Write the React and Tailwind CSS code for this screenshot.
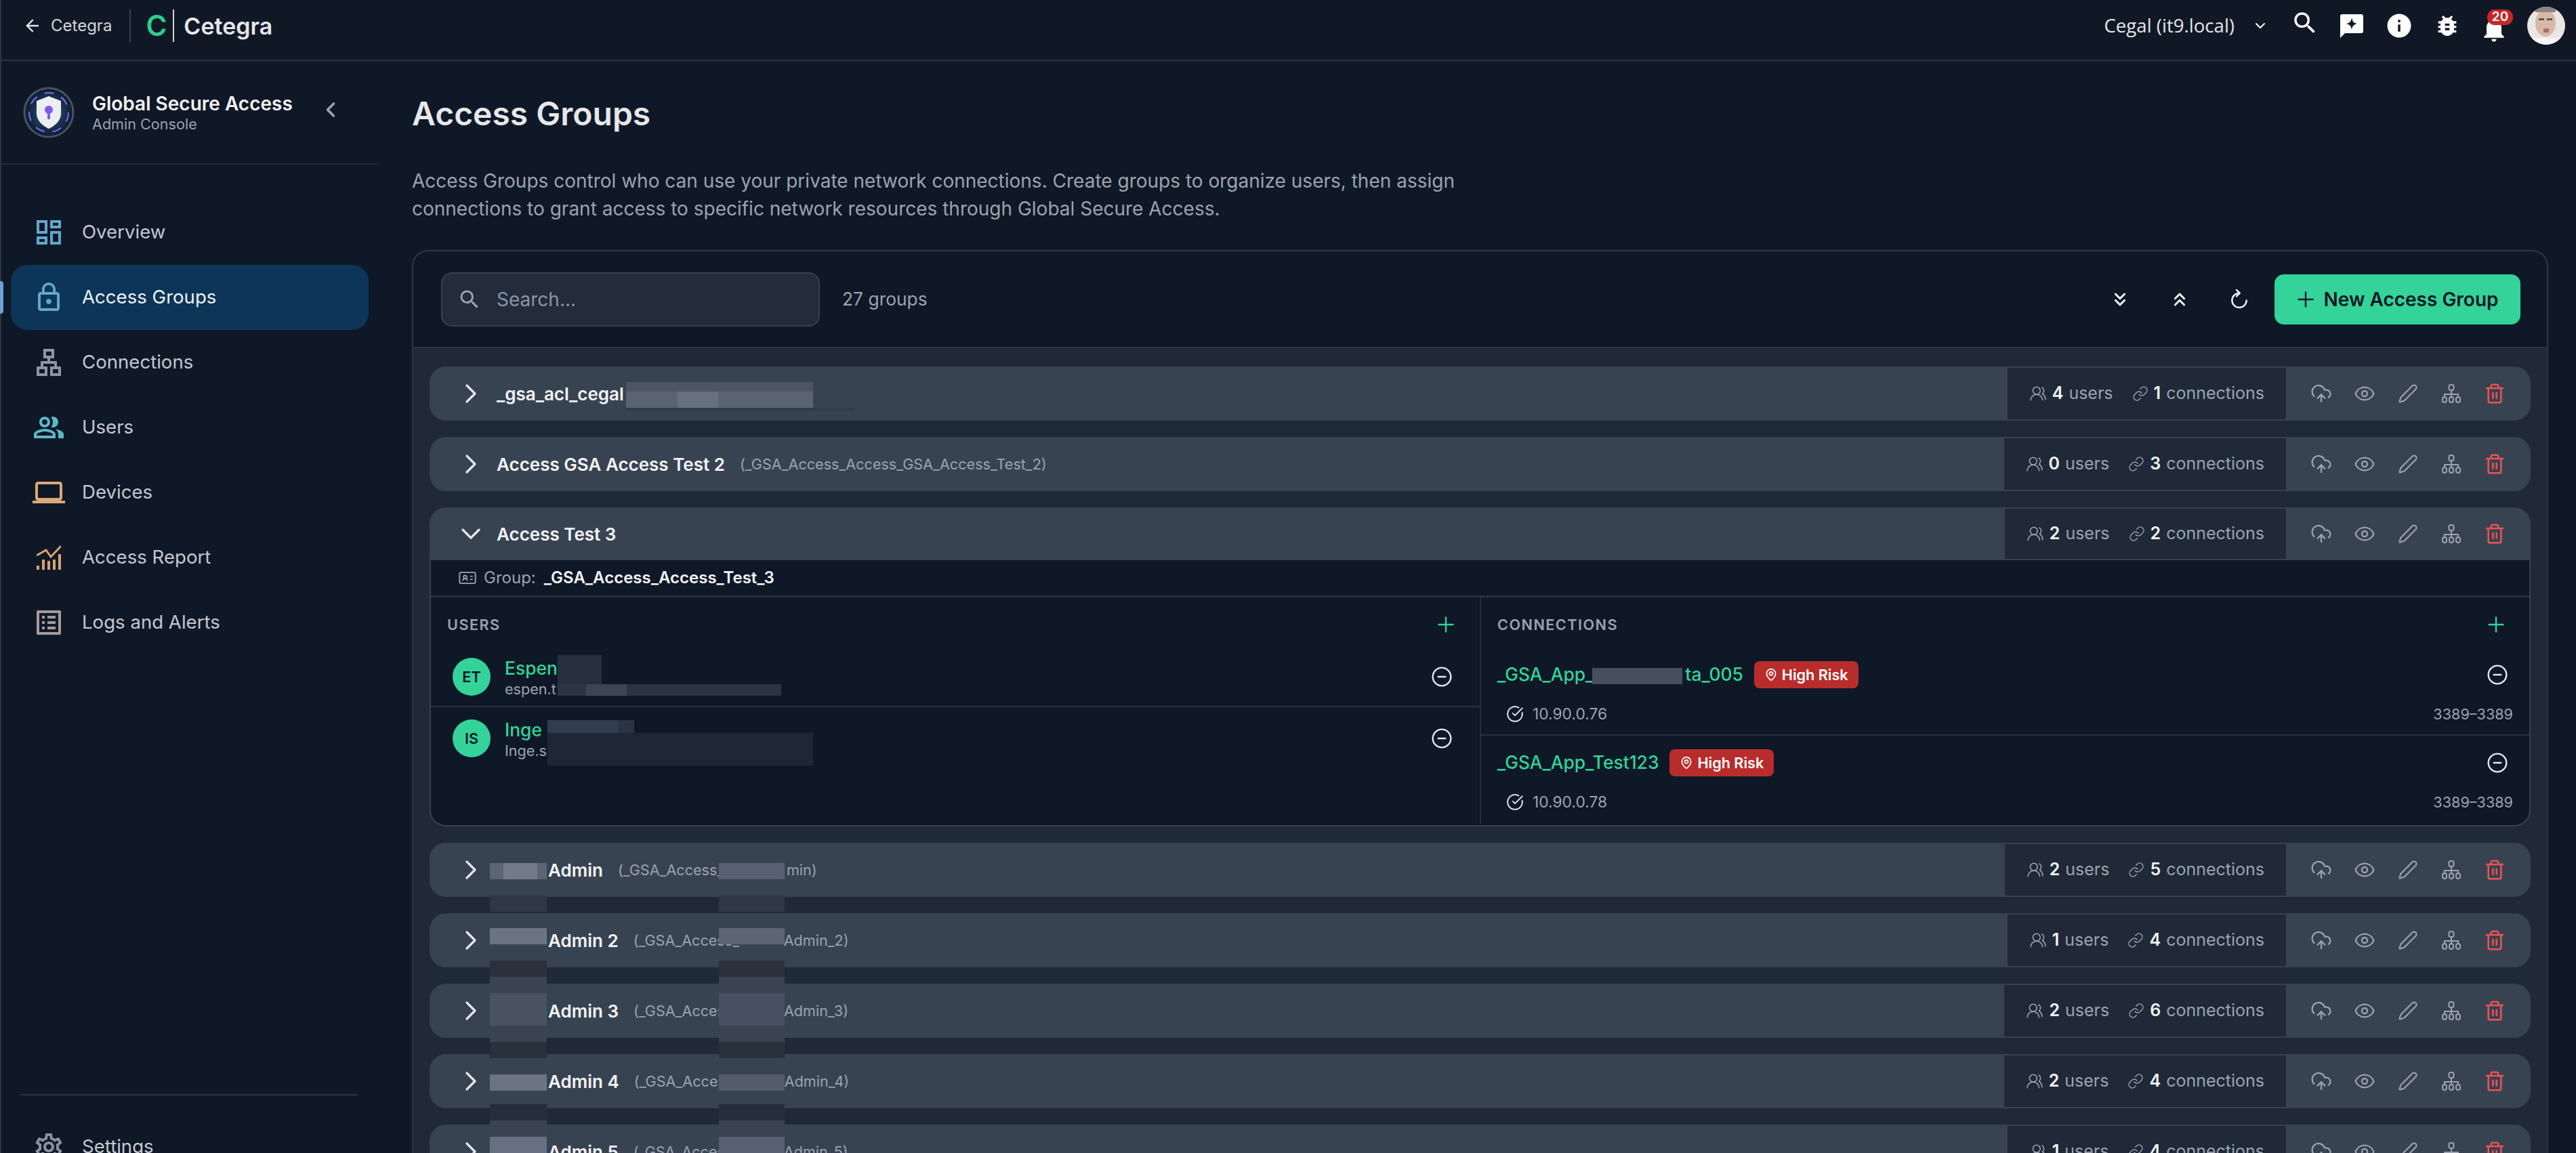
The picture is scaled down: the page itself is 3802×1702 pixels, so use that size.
import React from "react";
import {
  ArrowLeft,
  ChevronDown,
  ChevronLeft,
  ChevronRight,
  ChevronsDown,
  ChevronsUp,
  CircleCheckBig,
  CircleMinus,
  CloudUpload,
  Eye,
  IdCard,
  Link,
  MapPin,
  Pen,
  Plus,
  Trash2,
  UsersRound,
} from "lucide-react";
import {
  MdBugReport,
  MdInfo,
  MdLockOutline,
  MdNotifications,
  MdOutlineDashboard,
  MdOutlineLan,
  MdOutlineLaptop,
  MdOutlineListAlt,
  MdOutlinePeopleAlt,
  MdOutlineSettings,
  MdSearch,
} from "react-icons/md";

// pixelated redaction blocks from the screenshot
const mosaic = [
  "left-[924px] top-[564px] w-[276px] h-[14px] bg-[#4b5563]",
  "left-[924px] top-[578px] w-[276px] h-[24px] bg-[#5a6471]",
  "left-[1000px] top-[578px] w-[60px] h-[24px] bg-[#667080]",
  "left-[924px] top-[602px] w-[338px] h-[5px] bg-[#333c4a]",

  "left-[823px] top-[967px] w-[65px] h-[43px] bg-[#252f3e]",
  "left-[823px] top-[1010px] w-[330px] h-[17px] bg-[#2c3543]",
  "left-[865px] top-[1010px] w-[60px] h-[17px] bg-[#3c4553]",
  "left-[808px] top-[1063px] w-[128px] h-[19px] bg-[#2a3444]",
  "left-[808px] top-[1063px] w-[104px] h-[19px] bg-[#333d50]",
  "left-[808px] top-[1082px] w-[392px] h-[48px] bg-[#1e2735]",
  "left-[2350px] top-[986px] w-[133px] h-[24px] bg-[#474f5d]",

  "left-[723px] top-[1274px] w-[84px] h-[24px] bg-[#5b6573]",
  "left-[743px] top-[1274px] w-[50px] h-[24px] bg-[#727b8a]",
  "left-[1061px] top-[1274px] w-[97px] h-[24px] bg-[#566070]",
  "left-[723px] top-[1322px] w-[84px] h-[24px] bg-[#2f3846]",
  "left-[1061px] top-[1322px] w-[97px] h-[24px] bg-[#2f3846]",
  "left-[723px] top-[1370px] w-[84px] h-[24px] bg-[#6a7482]",
  "left-[1061px] top-[1370px] w-[97px] h-[24px] bg-[#5b6573]",
  "left-[723px] top-[1418px] w-[84px] h-[24px] bg-[#2a313d]",
  "left-[1061px] top-[1418px] w-[97px] h-[24px] bg-[#2a313d]",
  "left-[723px] top-[1442px] w-[84px] h-[24px] bg-[#3a4350]",
  "left-[1061px] top-[1442px] w-[97px] h-[24px] bg-[#3a4350]",
  "left-[723px] top-[1466px] w-[84px] h-[48px] bg-[#485260]",
  "left-[1061px] top-[1466px] w-[97px] h-[48px] bg-[#465060]",
  "left-[723px] top-[1514px] w-[84px] h-[24px] bg-[#3a4350]",
  "left-[1061px] top-[1514px] w-[97px] h-[24px] bg-[#3a4350]",
  "left-[723px] top-[1538px] w-[84px] h-[24px] bg-[#2a313d]",
  "left-[1061px] top-[1538px] w-[97px] h-[24px] bg-[#2a313d]",
  "left-[723px] top-[1586px] w-[84px] h-[24px] bg-[#6a7482]",
  "left-[1061px] top-[1586px] w-[97px] h-[24px] bg-[#525c6a]",
  "left-[723px] top-[1630px] w-[84px] h-[24px] bg-[#252e3b]",
  "left-[1061px] top-[1630px] w-[97px] h-[24px] bg-[#252e3b]",
  "left-[723px] top-[1654px] w-[84px] h-[24px] bg-[#3a4350]",
  "left-[1061px] top-[1654px] w-[97px] h-[24px] bg-[#3a4350]",
  "left-[723px] top-[1678px] w-[84px] h-[24px] bg-[#667080]",
  "left-[1061px] top-[1678px] w-[97px] h-[24px] bg-[#566070]",
];

const groups = [
  { name: "_gsa_acl_cegal", users: 4, conns: 1 },
  { name: "Access GSA Access Test 2", sub: "(_GSA_Access_Access_GSA_Access_Test_2)", users: 0, conns: 3 },
  { name: "Access Test 3", users: 2, conns: 2, open: true },
  { name: "Admin", hidden: true, sub: "(_GSA_Access_", subEnd: "min)", gap: "w-[249px]", users: 2, conns: 5 },
  { name: "Admin 2", hidden: true, sub: "(_GSA_Access_", subEnd: "Admin_2)", gap: "w-[222px]", users: 1, conns: 4 },
  { name: "Admin 3", hidden: true, sub: "(_GSA_Access_", subEnd: "Admin_3)", gap: "w-[222px]", users: 2, conns: 6 },
  { name: "Admin 4", hidden: true, sub: "(_GSA_Access_", subEnd: "Admin_4)", gap: "w-[222px]", users: 2, conns: 4 },
  { name: "Admin 5", hidden: true, sub: "(_GSA_Access_", subEnd: "Admin_5)", gap: "w-[222px]", users: 1, conns: 4 },
];

function ReportIcon() {
  return (
    <svg width="36" height="36" viewBox="0 0 36 36" fill="#d9a272">
      <path d="M0 15 L14 7 L21 17 L36 1" fill="none" stroke="#d9a272" strokeWidth="3" />
      <rect x="0" y="30" width="4" height="6" />
      <rect x="8" y="21" width="4" height="15" />
      <rect x="16" y="23" width="4" height="13" />
      <rect x="24" y="21" width="4" height="15" />
      <rect x="32" y="13" width="4" height="23" />
    </svg>
  );
}

function ShieldLogo() {
  return (
    <svg width="76" height="76" viewBox="0 0 76 76">
      <defs>
        <radialGradient id="glow">
          <stop offset="0%" stopColor="#7c9cc4" />
          <stop offset="60%" stopColor="#1b3554" />
          <stop offset="100%" stopColor="#0d1a2c" />
        </radialGradient>
      </defs>
      <circle cx="38" cy="38" r="36" fill="url(#glow)" stroke="#4a5260" strokeWidth="3" />
      <circle cx="38" cy="38" r="29" fill="none" stroke="#7b6cf0" strokeWidth="2" strokeDasharray="14 12" />
      <path d="M38 14 L56 21 V39 C56 50 47 58 38 62 C29 58 20 50 20 39 V21 Z" fill="#eceef1" />
      <circle cx="38" cy="34" r="6" fill="#7c5cf0" />
      <rect x="36" y="36" width="4" height="12" rx="1" fill="#7c5cf0" />
    </svg>
  );
}

function FeedbackIcon() {
  return (
    <svg width="34" height="35" viewBox="0 0 34 35">
      <path d="M3 0 H31 A3 3 0 0 1 34 3 V25 A3 3 0 0 1 31 28 H7 L0 35 V3 A3 3 0 0 1 3 0 Z" fill="#ffffff" />
      <path d="M17 5 C18 11 20 13 25 14 C20 15 18 17 17 23 C16 17 14 15 9 14 C14 13 16 11 17 5 Z" fill="#101826" />
    </svg>
  );
}

function TreeIcon() {
  return (
    <svg width="30" height="30" viewBox="0 0 30 30" fill="none" stroke="#9ca3af" strokeWidth="2">
      <rect x="11.5" y="2" width="7" height="8" rx="2.5" />
      <path d="M15 10 V20 M5 20 V16 H25 V20" />
      <rect x="2" y="20" width="6" height="8" rx="3" />
      <rect x="12" y="20" width="6" height="8" rx="3" />
      <rect x="22" y="20" width="6" height="8" rx="3" />
    </svg>
  );
}

function RefreshIcon() {
  return (
    <svg width="32" height="32" viewBox="0 0 24 24" fill="none" stroke="currentColor" strokeWidth="1.8" strokeLinecap="round" strokeLinejoin="round">
      <path d="M12 5a8 8 0 1 0 8 8" />
      <path d="M9 1.5 L12.5 5 L9 8.5" />
    </svg>
  );
}

function Avatar() {
  return (
    <svg width="56" height="56" viewBox="0 0 56 56">
      <defs>
        <clipPath id="face">
          <circle cx="28" cy="28" r="28" />
        </clipPath>
      </defs>
      <g clipPath="url(#face)">
        <rect width="56" height="56" fill="#e9e6e3" />
        <ellipse cx="27" cy="24" rx="15" ry="20" fill="#d8b9a8" />
        <rect x="12" y="0" width="30" height="8" fill="#8d857f" />
        <rect x="17" y="17" width="8" height="3" fill="#5a5658" />
        <rect x="29" y="17" width="8" height="3" fill="#5a5658" />
        <rect x="24" y="32" width="8" height="6" fill="#a8706a" />
        <rect x="0" y="46" width="56" height="10" fill="#f5f5f5" />
      </g>
    </svg>
  );
}

function NavItem({ icon, label, active }) {
  return (
    <div
      className={
        active
          ? "flex h-[96px] items-center gap-[25px] rounded-[24px] bg-[#0c3558] pl-[32px] text-[#eef1f5]"
          : "flex h-[96px] items-center gap-[25px] rounded-[24px] pl-[32px] text-[#c3c8d1]"
      }
    >
      <span className="flex h-[48px] w-[48px] items-center justify-center">{icon}</span>
      <span className="text-[27.6px]">{label}</span>
    </div>
  );
}

function Header() {
  return (
    <header className="flex h-[90px] items-center justify-between border-b-2 border-l-2 border-[#2b3544] bg-[#101826] pb-[12px] pl-[32px] pr-[16px]">
      <div className="flex items-center">
        <ArrowLeft size={28} color="#e5e7eb" strokeWidth={2} />
        <span className="ml-[13px] text-[24px] text-[#d1d5db]">Cetegra</span>
        <span className="ml-[26px] h-[48px] w-[2px] bg-[#374151]" />
        <span className="ml-[22px] text-[42px] leading-none font-semibold text-[#2ecc8f]">C</span>
        <span className="ml-[9px] h-[48px] w-[2px] bg-[#d1d5db]" />
        <span className="ml-[14px] text-[34px] font-semibold text-[#e5e7eb]">Cetegra</span>
      </div>
      <div className="flex items-center text-white">
        <span className="font-['Open_Sans',sans-serif] text-[27.6px] text-[#e5e7eb]">Cegal (it9.local)</span>
        <ChevronDown size={24} className="ml-[26px]" />
        <MdSearch size={42} className="ml-[33px] -translate-y-[4px]" />
        <span className="ml-[31px]">
          <FeedbackIcon />
        </span>
        <MdInfo size={42} className="ml-[32px]" />
        <MdBugReport size={40} className="ml-[30px]" />
        <span className="relative ml-[27px] mr-[27px] translate-y-[5px]">
          <MdNotifications size={44} />
          <span className="absolute -top-[7px] left-[12px] flex h-[23px] w-[38px] items-center justify-center rounded-[11px] bg-[#c62828] text-[19px] font-semibold">
            20
          </span>
        </span>
        <Avatar />
      </div>
    </header>
  );
}

function Sidebar() {
  return (
    <aside className="w-[561px] shrink-0 border-l-2 border-[#2b3544]">
      <div className="flex h-[153px] items-start border-b-2 border-[#1f2937] pl-[32px] pt-[38px]">
        <ShieldLogo />
        <div className="ml-[26px] mt-[8px]">
          <div className="text-[28px] leading-[34px] font-semibold text-[#f3f4f6]">Global Secure Access</div>
          <div className="text-[21.6px] leading-[26px] text-[#9ca3af]">Admin Console</div>
        </div>
        <ChevronLeft size={36} color="#9ca3af" strokeWidth={2.4} className="ml-[38px] mt-[16px]" />
      </div>
      <nav className="relative mt-[52px] w-[542px] pl-[14px]">
        <span className="absolute -left-[2px] top-[120px] h-[48px] w-[5px] rounded-r-[4px] bg-[#6c9fdc]" />
        <NavItem icon={<MdOutlineDashboard size={48} color="#64a6cc" />} label="Overview" />
        <NavItem icon={<MdLockOutline size={48} color="#64a6cc" />} label="Access Groups" active />
        <NavItem icon={<MdOutlineLan size={48} color="#92959f" />} label="Connections" />
        <NavItem icon={<MdOutlinePeopleAlt size={48} color="#5cb8c4" />} label="Users" />
        <NavItem icon={<MdOutlineLaptop size={48} color="#dba878" />} label="Devices" />
        <NavItem icon={<ReportIcon />} label="Access Report" />
        <NavItem icon={<MdOutlineListAlt size={48} color="#a39b9b" />} label="Logs and Alerts" />
      </nav>
      <div className="ml-[28px] mt-[648px] w-[498px] border-t-2 border-[#2b3544]" />
      <div className="mt-[28px] w-[542px] pl-[14px]">
        <NavItem icon={<MdOutlineSettings size={48} color="#8b919c" />} label="Settings" />
      </div>
    </aside>
  );
}

function GroupRow({ group }) {
  const { name, hidden, sub, subEnd, gap, users, conns, open } = group;
  return (
    <div
      className={
        open
          ? "flex h-[78px] items-center rounded-t-[24px] border-2 border-[#374151] bg-[#384352]"
          : "flex h-[80px] items-center rounded-[24px] border-2 border-[#374151] bg-[#384352]"
      }
    >
      <span className="ml-[35px] mr-[14px] text-[#e5e7eb]">
        {open ? <ChevronDown size={48} strokeWidth={1.6} /> : <ChevronRight size={48} strokeWidth={1.6} />}
      </span>
      {hidden && <span className="w-[76px]" />}
      <span className="whitespace-nowrap text-[26px] font-semibold text-[#f3f4f6]">{name}</span>
      {sub && (
        <span className="ml-[22px] flex whitespace-nowrap text-[21.6px] text-[#9ca3af]">
          <span className={gap}>{sub}</span>
          {subEnd && <span>{subEnd}</span>}
        </span>
      )}
      <div className="ml-auto flex h-full items-center gap-[28px] bg-[#1f2937] px-[32px] text-[25px] text-[#9ca3af]">
        <span className="flex items-center gap-[8px]">
          <UsersRound size={26} strokeWidth={1.5} />
          <b className="font-semibold text-[#f3f4f6]">{users}</b> users
        </span>
        <span className="flex items-center gap-[8px]">
          <Link size={24} strokeWidth={1.5} />
          <b className="font-semibold text-[#f3f4f6]">{conns}</b> connections
        </span>
      </div>
      <div className="flex w-[359px] items-center pl-[20px] text-[#9ca3af]">
        <span className="flex w-[64px] justify-center">
          <CloudUpload size={32} strokeWidth={1.7} />
        </span>
        <span className="flex w-[64px] justify-center">
          <Eye size={32} strokeWidth={1.7} />
        </span>
        <span className="flex w-[64px] justify-center">
          <Pen size={30} strokeWidth={1.7} />
        </span>
        <span className="flex w-[64px] justify-center">
          <TreeIcon />
        </span>
        <span className="flex w-[64px] justify-center text-[#f05252]">
          <Trash2 size={32} strokeWidth={1.9} />
        </span>
      </div>
    </div>
  );
}

function UserRow({ initials, name, email, className }) {
  return (
    <div className={`flex items-center pl-[32px] pr-[40px] ${className}`}>
      <span className="flex h-[56px] w-[56px] shrink-0 items-center justify-center rounded-full bg-[#34d399] text-[21.6px] font-semibold text-[#0f1826]">
        {initials}
      </span>
      <div className="ml-[21px] mt-[2px]">
        <div className="text-[26.4px] leading-[34px] font-medium text-[#34d399]">{name}</div>
        <div className="text-[21.6px] leading-[28px] text-[#9ca3af]">{email}</div>
      </div>
      <CircleMinus size={32} color="#e5e7eb" strokeWidth={1.8} className="ml-auto" />
    </div>
  );
}

function ConnRow({ name, tail, ip, className }) {
  return (
    <div className={`pl-[24px] pr-[24px] ${className}`}>
      <div className="flex h-[40px] items-center">
        <span className="whitespace-nowrap text-[26.4px] font-medium text-[#34d399]">
          {name}
          {tail && <span className="inline-block w-[135px]" />}
          {tail}
        </span>
        <span className="ml-[16px] flex h-[40px] items-center gap-[6px] rounded-[8px] bg-[#b92c2c] px-[15px] text-[21.6px] font-semibold text-white">
          <MapPin size={20} strokeWidth={2} />
          High Risk
        </span>
        <CircleMinus size={32} color="#e5e7eb" strokeWidth={1.8} className="ml-auto mr-[7px]" />
      </div>
      <div className="mt-[23px] flex h-[30px] items-center">
        <CircleCheckBig size={26} color="#e5e7eb" strokeWidth={1.8} className="ml-[13px]" />
        <span className="ml-[13px] text-[22.8px] text-[#9ca3af]">{ip}</span>
        <span className="ml-auto text-[21.6px] text-[#9ca3af]">3389–3389</span>
      </div>
    </div>
  );
}

function GroupDetail() {
  return (
    <div className="h-[393px] rounded-b-[24px] border-x-2 border-b-2 border-[#374151] bg-[#0e1826]">
      <div className="flex h-[55px] items-center border-b-[3px] border-[#263140] pl-[40px] text-[24px]">
        <IdCard size={28} color="#9ca3af" strokeWidth={1.6} />
        <span className="ml-[10px] text-[#9ca3af]">Group:</span>
        <span className="ml-[12px] font-semibold text-[#f3f4f6]">_GSA_Access_Access_Test_3</span>
      </div>
      <div className="flex h-[334px]">
        <div className="w-[1548px]">
          <div className="flex h-[80px] items-center justify-between pl-[24px] pr-[32px]">
            <span className="text-[21.6px] font-semibold tracking-[1.5px] text-[#9ca3af]">USERS</span>
            <Plus size={36} color="#34d399" strokeWidth={1.6} />
          </div>
          <UserRow initials="ET" name="Espen" email="espen.t" className="h-[82px] border-b-2 border-[#263140] pb-[6px]" />
          <UserRow initials="IS" name="Inge S" email="Inge.s" className="h-[88px] pt-[4px]" />
        </div>
        <div className="flex-1 border-l-2 border-[#263140]">
          <div className="flex h-[80px] items-center justify-between pl-[24px] pr-[31px]">
            <span className="text-[21.6px] font-semibold tracking-[1.5px] text-[#9ca3af]">CONNECTIONS</span>
            <Plus size={36} color="#34d399" strokeWidth={1.6} />
          </div>
          <ConnRow name="_GSA_App_" tail="ta_005" ip="10.90.0.76" className="h-[124px] border-b-2 border-[#263140] pt-[14px]" />
          <ConnRow name="_GSA_App_Test123" ip="10.90.0.78" className="pt-[20px]" />
        </div>
      </div>
    </div>
  );
}

export default function App() {
  return (
    <div className="relative h-[1702px] w-full overflow-hidden bg-[#0f1826] font-[Inter,sans-serif]">
      <Header />
      <div className="flex">
        <Sidebar />
        <main className="min-w-0 flex-1 pl-[47px] pr-[41px]">
          <h1 className="pt-[46px] text-[48px] leading-[64px] font-semibold text-[#e5e7eb]">Access Groups</h1>
          <p className="mt-[47px] w-[1620px] text-[28px] leading-[41px] text-[#9ca3af]">
            Access Groups control who can use your private network connections. Create groups to organize users, then
            assign connections to grant access to specific network resources through Global Secure Access.
          </p>
          <section className="mt-[40px] overflow-hidden rounded-t-[24px] border-x-2 border-t-2 border-[#2d3846] bg-[#1f2937]">
            <div className="flex h-[143px] items-center border-b-2 border-[#2b3544] bg-[#0e1826] pl-[41px] pr-[39px]">
              <div className="flex h-[80px] w-[559px] items-center rounded-[16px] border-2 border-[#374151] bg-[#222c3a] pl-[22px]">
                <MdSearch size={36} color="#9ca3af" />
                <span className="ml-[22px] text-[28px] text-[#8b94a3]">Search...</span>
              </div>
              <span className="ml-[33px] text-[26.4px] text-[#9ca3af]">27 groups</span>
              <div className="ml-auto mr-[8px] flex text-[#f3f4f6]">
                <span className="flex w-[88px] justify-center">
                  <ChevronsDown size={32} strokeWidth={2.2} />
                </span>
                <span className="flex w-[88px] justify-center">
                  <ChevronsUp size={32} strokeWidth={2.2} />
                </span>
                <span className="flex w-[88px] justify-center">
                  <RefreshIcon />
                </span>
              </div>
              <button className="flex h-[74px] w-[363px] items-center justify-center gap-[8px] rounded-[14px] bg-[#34d399] pr-[4px] text-[28px] font-semibold text-[#0f1826]">
                <Plus size={36} strokeWidth={1.6} />
                New Access Group
              </button>
            </div>
            <div className="flex flex-col gap-[24px] px-[24px] pt-[27px]">
              {groups.map((group) =>
                group.open ? (
                  <div key={group.name}>
                    <GroupRow group={group} />
                    <GroupDetail />
                  </div>
                ) : (
                  <GroupRow key={group.name} group={group} />
                )
              )}
            </div>
          </section>
        </main>
      </div>
      {mosaic.map((block) => (
        <div key={block} className={`absolute ${block}`} />
      ))}
    </div>
  );
}
